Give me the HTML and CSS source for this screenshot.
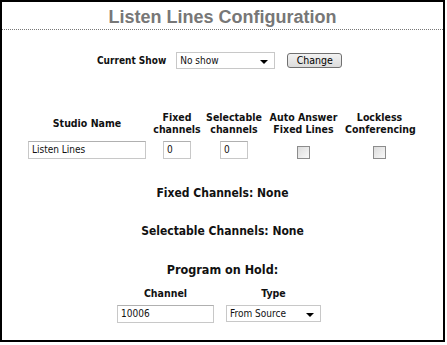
FILE: index.html
```html
<!DOCTYPE html>
<html>
<head>
<meta charset="utf-8">
<link rel="stylesheet" href="styles.css">
</head>
<body>
<div class="frame">
  <h1 class="title">Listen Lines Configuration</h1>
  <div class="show-row">
    <span class="label">Current Show</span>
    <div class="select show-select"><span>No show</span><span class="arrow"></span></div>
    <button class="btn">Change</button>
  </div>
  <div class="studio-grid">
    <div class="hd hd-mid">Studio Name</div>
    <div class="hd">Fixed<br>channels</div>
    <div class="hd">Selectable<br>channels</div>
    <div class="hd">Auto Answer<br>Fixed Lines</div>
    <div class="hd">Lockless<br>Conferencing</div>
    <div class="cell"><div class="input name-input">Listen Lines</div></div>
    <div class="cell"><div class="input num-input">0</div></div>
    <div class="cell"><div class="input num-input">0</div></div>
    <div class="cell"><div class="check"></div></div>
    <div class="cell"><div class="check"></div></div>
  </div>
  <div class="section first">Fixed Channels: None</div>
  <div class="section">Selectable Channels: None</div>
  <div class="section poh">Program on Hold:</div>
  <div class="poh-grid">
    <div class="hd">Channel</div>
    <div class="hd">Type</div>
    <div class="cell"><div class="input chan-input">10006</div></div>
    <div class="cell"><div class="select type-select"><span>From Source</span><span class="arrow"></span></div></div>
  </div>
</div>
</body>
</html>
```

FILE: styles.css
```css
* { box-sizing: border-box; }
html, body { margin: 0; padding: 0; background: #fff; }
body { font-family: "DejaVu Sans Condensed", "DejaVu Sans", sans-serif; font-size: 10px; color: #111; }
.frame {
  width: 445px;
  height: 342px;
  border: 2px solid #000;
}
.title {
  margin: 0;
  height: 28px;
  padding-top: 5px;
  font-family: "Liberation Sans", Arial, sans-serif;
  font-size: 18px;
  font-weight: bold;
  color: #777;
  text-align: center;
  line-height: 20px;
  border-bottom: 1px dotted #777;
}
.show-row {
  display: flex;
  align-items: center;
  margin-top: 22px;
  margin-left: 95px;
}
.label { font-weight: bold; margin-right: 10px; font-size: 10px; }
.select {
  display: flex;
  align-items: center;
  justify-content: space-between;
  height: 17px;
  border: 1px solid #c8c8c8;
  background: #fff;
  padding: 0 6px 0 3px;
}
.show-select { width: 99px; }
.arrow {
  width: 0;
  height: 0;
  border-left: 4px solid transparent;
  border-right: 4px solid transparent;
  border-top: 4px solid #000;
  margin-top: 3px;
}
.btn {
  margin-left: 12px;
  width: 55px;
  height: 15px;
  padding: 0;
  font: 10.5px "DejaVu Sans Condensed", "DejaVu Sans", sans-serif;
  color: #000;
  border: 1px solid #707070;
  border-radius: 3px;
  background: linear-gradient(#f2f2f2, #dcdcdc);
  line-height: 13px;
}
.studio-grid {
  display: grid;
  grid-template-columns: 122px 58px 56px 83px 69px;
  justify-content: start;
  margin-left: 24px;
  margin-top: 42px;
  align-items: end;
}
.hd { font-weight: bold; text-align: center; line-height: 12px; font-size: 10.5px; }
.hd-mid { align-self: center; }
.cell { display: flex; justify-content: center; margin-top: 6px; }
.input {
  height: 18px;
  border: 1px solid #c8c8c8;
  border-top-color: #b0b0b0;
  padding: 0 3px;
  line-height: 16px;
  font-size: 10px;
  background: #fff;
}
.name-input { width: 118px; }
.num-input { width: 28px; }
.check {
  width: 13px;
  height: 13px;
  margin-top: 4px;
  border: 1px solid #8c8c8c;
  background: linear-gradient(135deg, #dcdcdc, #f8f8f8);
}
.section {
  text-align: center;
  font-weight: bold;
  font-size: 12px;
  margin-top: 23px;
  line-height: 15px;
}
.section.first { margin-top: 27px; }
.poh { font-size: 12.5px; }
.poh-grid {
  display: grid;
  grid-template-columns: 97px 95px;
  column-gap: 12px;
  justify-content: start;
  margin-left: 115px;
  margin-top: 10px;
}
.chan-input { width: 97px; }
.type-select { width: 95px; }
```
